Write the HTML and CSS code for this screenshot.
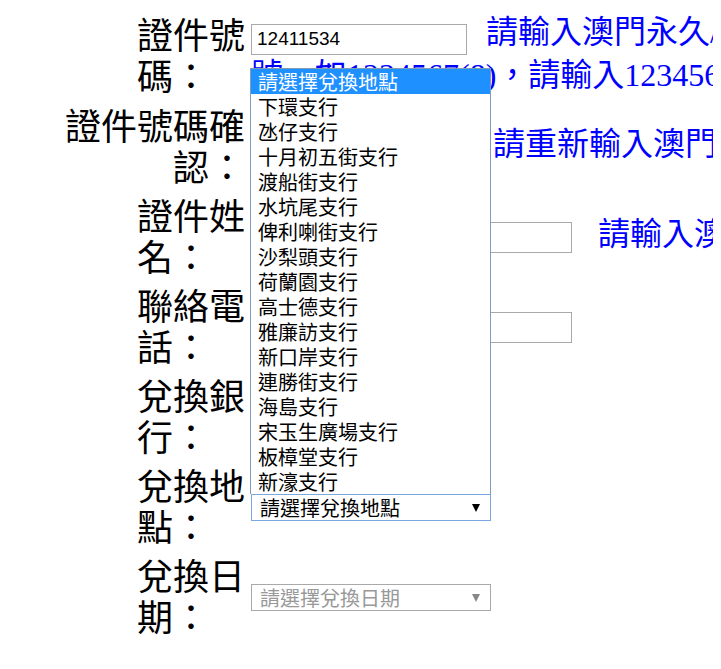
FILE: index.html
```html
<!DOCTYPE html>
<html lang="zh-Hant">
<head>
  <meta charset="UTF-8">
  <meta name="viewport" content="width=device-width, initial-scale=1.0">
  <title>兌換預約</title>
  <link rel="stylesheet" href="styles.css">
</head>
<body>
  <form class="form">
    <div class="row">
      <div class="label-cell"><label class="label">證件號碼：</label></div>
      <div class="field field-multi">
        <input class="text-input" type="text" value="12411534"><span class="hint">請輸入澳門永久/非永久居民身份證號，如1234567(8)，請輸入12345678</span>
      </div>
    </div>

    <div class="row">
      <div class="label-cell"><label class="label label-wide">證件號碼確認：</label></div>
      <div class="field">
        <input class="text-input" type="text"><span class="hint hint-confirm">請重新輸入澳門身份證號碼</span>
      </div>
    </div>

    <div class="row">
      <div class="label-cell"><label class="label">證件姓名：</label></div>
      <div class="field">
        <input class="text-input wide" type="text"><span class="hint hint-wide">請輸入澳門身份證姓名</span>
      </div>
    </div>

    <div class="row">
      <div class="label-cell"><label class="label">聯絡電話：</label></div>
      <div class="field">
        <input class="text-input wide" type="text">
      </div>
    </div>

    <div class="row">
      <div class="label-cell"><label class="label">兌換銀行：</label></div>
      <div class="field">
        <div class="select"><span>請選擇兌換銀行</span><span class="arrow"></span></div>
      </div>
    </div>

    <div class="row">
      <div class="label-cell"><label class="label">兌換地點：</label></div>
      <div class="field">
        <div class="select open">
          <span>請選擇兌換地點</span><span class="arrow"></span>
          <ul class="options">
            <li class="active">請選擇兌換地點</li>
            <li>下環支行</li>
            <li>氹仔支行</li>
            <li>十月初五街支行</li>
            <li>渡船街支行</li>
            <li>水坑尾支行</li>
            <li>俾利喇街支行</li>
            <li>沙梨頭支行</li>
            <li>荷蘭園支行</li>
            <li>高士德支行</li>
            <li>雅廉訪支行</li>
            <li>新口岸支行</li>
            <li>連勝街支行</li>
            <li>海島支行</li>
            <li>宋玉生廣場支行</li>
            <li>板樟堂支行</li>
            <li>新濠支行</li>
          </ul>
        </div>
      </div>
    </div>

    <div class="row">
      <div class="label-cell"><label class="label">兌換日期：</label></div>
      <div class="field">
        <div class="select disabled"><span>請選擇兌換日期</span><span class="arrow"></span></div>
      </div>
    </div>
  </form>
</body>
</html>
```

FILE: styles.css
```css
* { box-sizing: border-box; }
html, body { overflow: hidden; }
body {
  margin: 8px;
  background: #fff;
  color: #000;
  font-family: "Noto Sans CJK TC", sans-serif;
}
.form {
  display: flex;
  flex-direction: column;
  gap: 8px;
  padding-top: 4px;
}
.row {
  display: flex;
  align-items: center;
}
.label-cell {
  flex: 0 0 237px;
  display: flex;
  justify-content: flex-end;
}
.label {
  display: block;
  width: 108px;
  font-size: 36px;
  line-height: 41px;
}
.label-wide {
  width: 182px;
  text-align: right;
}
.field {
  flex: 0 0 740px;
  margin-left: 6px;
  font-family: "Liberation Serif", "Noto Sans CJK TC", serif;
  font-size: 32px;
  line-height: 41px;
}
.text-input {
  width: 216px;
  height: 31px;
  border: 1px solid #a9a9a9;
  padding: 0 5px;
  font: 19px "Liberation Sans", sans-serif;
  color: #000;
  vertical-align: middle;
}
.field-multi .text-input { vertical-align: -2px; }
.text-input.wide { width: 321px; }
.hint {
  color: #00f;
  margin-left: 19px;
}
.hint-confirm { margin-left: 26px; }
.hint-wide { margin-left: 26px; }

.select {
  position: relative;
  display: inline-flex;
  align-items: center;
  justify-content: space-between;
  width: 240px;
  height: 27px;
  border: 1px solid #a9a9a9;
  padding: 0 10px 0 8px;
  font: 20px/24px "Noto Sans CJK TC", sans-serif;
  vertical-align: middle;
}
.select.open { border-color: #7aa6e2; }
.select.disabled { color: #999; }
.arrow {
  width: 0;
  height: 0;
  border-left: 4px solid transparent;
  border-right: 4px solid transparent;
  border-top: 8px solid #000;
}
.disabled .arrow { border-top-color: #888; }
.options {
  position: absolute;
  left: -2px;
  bottom: calc(100% + 1px);
  width: 241px;
  margin: 0;
  padding: 0;
  list-style: none;
  background: #fff;
  color: #000;
  border: 1px solid #7f9db9;
  border-bottom: 0;
  z-index: 2;
}
.options li {
  height: 25px;
  line-height: 25px;
  padding-left: 7px;
  white-space: nowrap;
}
.options li.active {
  background: #1e90ff;
  color: #fff;
}
```
